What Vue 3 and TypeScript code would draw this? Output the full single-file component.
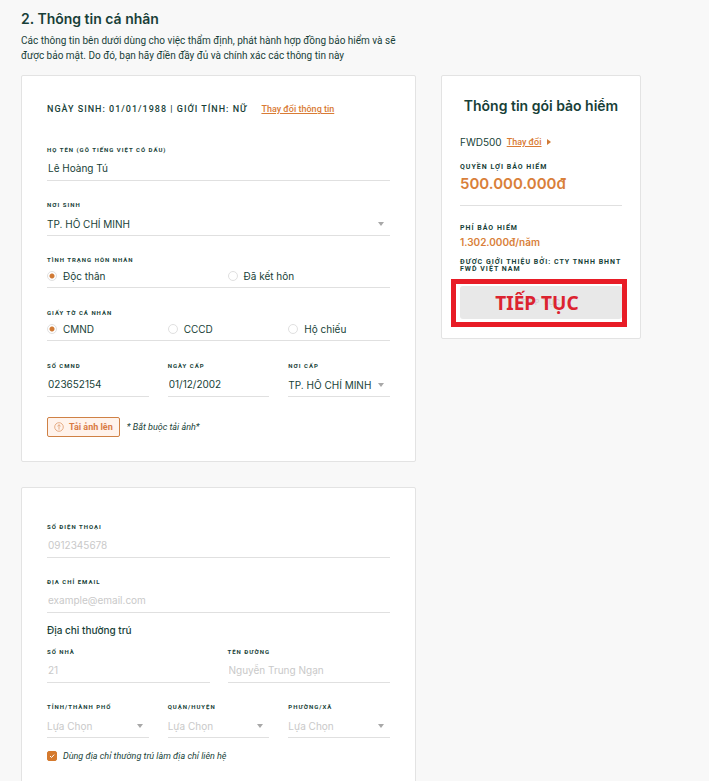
<script setup lang="ts">
import { reactive, ref } from 'vue'

interface Choice {
  id: string
  label: string
}

interface Place {
  id: string
  label: string
}

const person = reactive({
  fullName: 'Lê Hoàng Tú',
  birthPlace: 'TP. HỒ CHÍ MINH',
  marital: 'single',
  paper: 'cmnd',
  idNumber: '023652154',
  issueDate: '01/12/2002',
  issuePlace: 'TP. HỒ CHÍ MINH',
})

const contact = reactive({
  phone: '',
  email: '',
  house: '',
  street: '',
})

const sameAddress = ref(true)

const maritalChoices: Choice[] = [
  { id: 'single', label: 'Độc thân' },
  { id: 'married', label: 'Đã kết hôn' },
]

const paperChoices: Choice[] = [
  { id: 'cmnd', label: 'CMND' },
  { id: 'cccd', label: 'CCCD' },
  { id: 'passport', label: 'Hộ chiếu' },
]

const places: Place[] = [
  { id: 'province', label: 'TỈNH/THÀNH PHỐ' },
  { id: 'district', label: 'QUẬN/HUYỆN' },
  { id: 'ward', label: 'PHƯỜNG/XÃ' },
]
</script>

<template>
  <main class="page">
    <header class="intro">
      <h1>2. Thông tin cá nhân</h1>
      <p>Các thông tin bên dưới dùng cho việc thẩm định, phát hành hợp đồng bảo hiểm và sẽ được bảo mật. Do đó, bạn hãy điền đầy đủ và chính xác các thông tin này</p>
    </header>

    <div class="columns">
      <form class="forms" @submit.prevent>
        <section class="card">
          <div class="summary">
            <span>NGÀY SINH: 01/01/1988 | GIỚI TÍNH: NỮ</span>
            <a class="link" href="#">Thay đổi thông tin</a>
          </div>

          <div class="row">
            <div class="field">
              <label for="full-name">HỌ TÊN (GÕ TIẾNG VIỆT CÓ DẤU)</label>
              <input id="full-name" v-model="person.fullName" class="control" type="text" />
            </div>
          </div>

          <div class="row">
            <div class="field">
              <label for="birth-place">NƠI SINH</label>
              <div class="picker">
                <select id="birth-place" v-model="person.birthPlace" class="control">
                  <option>TP. HỒ CHÍ MINH</option>
                </select>
                <svg class="arrow" viewBox="0 0 6 4" aria-hidden="true"><path d="M0 0h6L3 4z" /></svg>
              </div>
            </div>
          </div>

          <fieldset class="row group">
            <legend>TÌNH TRẠNG HÔN NHÂN</legend>
            <div class="choices two">
              <label v-for="c in maritalChoices" :key="c.id" class="choice">
                <input v-model="person.marital" type="radio" name="marital" :value="c.id" />
                <span>{{ c.label }}</span>
              </label>
            </div>
          </fieldset>

          <fieldset class="row group">
            <legend>GIẤY TỜ CÁ NHÂN</legend>
            <div class="choices three">
              <label v-for="c in paperChoices" :key="c.id" class="choice">
                <input v-model="person.paper" type="radio" name="paper" :value="c.id" />
                <span>{{ c.label }}</span>
              </label>
            </div>
          </fieldset>

          <div class="row three">
            <div class="field">
              <label for="id-number">SỐ CMND</label>
              <input id="id-number" v-model="person.idNumber" class="control" type="text" />
            </div>
            <div class="field">
              <label for="issue-date">NGÀY CẤP</label>
              <input id="issue-date" v-model="person.issueDate" class="control" type="text" />
            </div>
            <div class="field">
              <label for="issue-place">NƠI CẤP</label>
              <div class="picker">
                <select id="issue-place" v-model="person.issuePlace" class="control">
                  <option>TP. HỒ CHÍ MINH</option>
                </select>
                <svg class="arrow" viewBox="0 0 6 4" aria-hidden="true"><path d="M0 0h6L3 4z" /></svg>
              </div>
            </div>
          </div>

          <div class="upload">
            <button type="button" class="upload-button">
              <svg viewBox="0 0 10 10" aria-hidden="true">
                <circle cx="5" cy="5" r="4.3" />
                <path d="M5 7.6V2.8M3.4 4.2L5 2.7l1.6 1.5" />
              </svg>
              <span>Tải ảnh lên</span>
            </button>
            <em>* Bắt buộc tải ảnh*</em>
          </div>
        </section>

        <section class="card contact">
          <div class="row">
            <div class="field">
              <label for="phone">SỐ ĐIỆN THOẠI</label>
              <input id="phone" v-model="contact.phone" class="control" type="tel" placeholder="0912345678" />
            </div>
          </div>

          <div class="row tight">
            <div class="field">
              <label for="email">ĐỊA CHỈ EMAIL</label>
              <input id="email" v-model="contact.email" class="control" type="email" placeholder="example@email.com" />
            </div>
          </div>

          <h2 class="subheading">Địa chỉ thường trú</h2>

          <div class="row two">
            <div class="field">
              <label for="house">SỐ NHÀ</label>
              <input id="house" v-model="contact.house" class="control" type="text" placeholder="21" />
            </div>
            <div class="field">
              <label for="street">TÊN ĐƯỜNG</label>
              <input id="street" v-model="contact.street" class="control" type="text" placeholder="Nguyễn Trung Ngạn" />
            </div>
          </div>

          <div class="row three tight">
            <div v-for="p in places" :key="p.id" class="field">
              <label :for="p.id">{{ p.label }}</label>
              <div class="picker">
                <select :id="p.id" class="control empty">
                  <option value="">Lựa Chọn</option>
                </select>
                <svg class="arrow" viewBox="0 0 6 4" aria-hidden="true"><path d="M0 0h6L3 4z" /></svg>
              </div>
            </div>
          </div>

          <label class="same">
            <span class="tick">
              <input v-model="sameAddress" type="checkbox" />
              <svg v-if="sameAddress" viewBox="0 0 10 10" aria-hidden="true"><path d="M3 5l1.5 1.5L7.2 3.6" /></svg>
            </span>
            <em>Dùng địa chỉ thường trú làm địa chỉ liên hệ</em>
          </label>
        </section>
      </form>

      <aside class="card plan">
        <h2>Thông tin gói bảo hiểm</h2>
        <div class="product">
          <span>FWD500</span>
          <a class="link" href="#">Thay đổi</a>
          <svg viewBox="0 0 4 6" aria-hidden="true"><path d="M0 0l4 3-4 3z" /></svg>
        </div>
        <h3>QUYỀN LỢI BẢO HIỂM</h3>
        <p class="benefit">500.000.000đ</p>
        <h3>PHÍ BẢO HIỂM</h3>
        <p class="fee">1.302.000đ/năm</p>
        <p class="agent">ĐƯỢC GIỚI THIỆU BỞI: CTY TNHH BHNT FWD VIỆT NAM</p>
        <div class="next">
          <button type="button">TIẾP TỤC</button>
          <strong class="callout">TIẾP TỤC</strong>
        </div>
      </aside>
    </div>
  </main>
</template>

<style>
body {
  background: #f8f8f8;
}
</style>

<style scoped>
.page {
  padding: 9px 68px 25px 21px;
  color: #183f38;
  font-family: Inter, "Noto Sans", sans-serif;
  font-size: 10px;
}

.page * {
  box-sizing: border-box;
}

h1,
h2,
h3,
p {
  margin: 0;
}

h1 {
  font-size: 14px;
  font-weight: 600;
  line-height: 20px;
}

.intro p {
  max-width: 395px;
  margin-top: 4px;
  font-family: Roboto, "Noto Sans", sans-serif;
  line-height: 15px;
}

.columns {
  display: grid;
  grid-template-columns: 395fr 200fr;
  gap: 25px;
  align-items: start;
  margin-top: 12px;
}

.forms {
  display: grid;
  gap: 25px;
  min-width: 0;
}

.card {
  min-width: 0;
  padding: 25px 25px 24px;
  border: 1px solid #e3e3e3;
  border-radius: 2px;
  background: #fff;
}

.contact {
  padding-top: 35px;
}

.link {
  color: #d97b35;
  font-family: Roboto, "Noto Sans", sans-serif;
  font-size: 9px;
  font-weight: 500;
  text-decoration: underline;
}

.summary {
  display: flex;
  align-items: center;
  gap: 14px;
  margin-bottom: 29px;
  font-family: Roboto, "Noto Sans", sans-serif;
  font-size: 9px;
  font-weight: 500;
  line-height: 16px;
  letter-spacing: 1px;
  white-space: nowrap;
}

.summary .link {
  letter-spacing: 0;
}

.row {
  margin-bottom: 20px;
}

.row.tight {
  margin-bottom: 10px;
}

.two,
.three {
  display: grid;
  grid-template-columns: 1fr 1fr;
  column-gap: 18px;
}

.three {
  grid-template-columns: 1fr 1fr 1fr;
  column-gap: 19px;
}

.field {
  min-width: 0;
}

.field label,
.group legend {
  display: block;
  padding: 0;
  font-family: Roboto, "Noto Sans", sans-serif;
  font-size: 6px;
  font-weight: 700;
  line-height: 8px;
  letter-spacing: 1px;
  white-space: nowrap;
}

.control {
  display: block;
  width: 100%;
  height: 27px;
  margin: 0;
  padding: 2px 1px 0;
  border: 0;
  border-bottom: 1px solid #e0e0e0;
  border-radius: 0;
  outline: 0;
  background: transparent;
  color: #183f38;
  font-family: inherit;
  font-size: 10px;
  appearance: none;
}

.control::placeholder,
.control.empty {
  color: #c9c9c9;
  opacity: 1;
}

.picker {
  display: grid;
  align-items: center;
}

.picker > * {
  grid-area: 1 / 1;
}

.picker .control {
  padding: 3px 16px 0 0;
}

.arrow {
  justify-self: end;
  width: 6px;
  height: 4px;
  margin: 3px 6px 0 0;
  fill: #a8a8a8;
  pointer-events: none;
}

.group {
  min-width: 0;
  margin-left: 0;
  margin-right: 0;
  margin-bottom: 21px;
  padding: 0;
  border: 0;
}

.choices {
  height: 24px;
  border-bottom: 1px solid #e0e0e0;
}

.choice {
  display: flex;
  align-items: center;
  gap: 6px;
}

.choice input {
  width: 10px;
  height: 10px;
  margin: 0;
  border: 1px solid #e0e0e0;
  border-radius: 50%;
  background: #fff;
  appearance: none;
}

.choice input:checked {
  background: radial-gradient(circle, #d07a35 2px, #fff 3px);
}

.upload {
  display: flex;
  align-items: center;
  gap: 7px;
}

em {
  font-family: Roboto, "Noto Sans", sans-serif;
  font-size: 9px;
  font-style: italic;
}

.upload-button {
  display: flex;
  align-items: center;
  gap: 5px;
  height: 20px;
  padding: 0 6px;
  border: 1px solid #cf8145;
  border-radius: 2px;
  background: #fff3ec;
  color: #d97b45;
  font-family: Roboto, "Noto Sans", sans-serif;
  font-size: 9px;
  font-weight: 700;
}

.upload-button svg {
  width: 10px;
  height: 10px;
  fill: none;
  stroke: #de9a6c;
  stroke-width: 0.8;
}

.subheading {
  margin-bottom: 10px;
  font-size: 10px;
  font-weight: 500;
  line-height: 15px;
}

.same {
  display: flex;
  align-items: center;
  gap: 6px;
  margin-top: 13px;
}

.tick {
  display: grid;
  width: 10px;
  height: 10px;
}

.tick > * {
  grid-area: 1 / 1;
  width: 10px;
  height: 10px;
  margin: 0;
}

.tick input {
  border: 1px solid #d57a2e;
  border-radius: 2px;
  appearance: none;
}

.tick input:checked {
  background: #d57a2e;
}

.tick svg {
  fill: none;
  stroke: #fff;
  pointer-events: none;
}

.plan {
  padding: 20px 18px 19px;
}

.plan h2 {
  font-size: 14px;
  font-weight: 600;
  line-height: 20px;
  text-align: center;
  white-space: nowrap;
}

.product {
  display: flex;
  align-items: center;
  gap: 5px;
  margin: 18px 0 13px;
  line-height: 16px;
}

.product svg {
  width: 4px;
  height: 6px;
  fill: #d07a35;
}

.plan h3,
.agent {
  font-family: Roboto, "Noto Sans", sans-serif;
  font-size: 7px;
  font-weight: 700;
  line-height: 8px;
  letter-spacing: 1px;
}

.benefit {
  margin-bottom: 18px;
  padding: 3px 0 11px;
  border-bottom: 1px solid #e0e0e0;
  color: #d97f3a;
  font-size: 15px;
  font-weight: 600;
  line-height: 20px;
}

.fee {
  margin: 4px 0 11px;
  color: #d97f3a;
  font-size: 10px;
  font-weight: 600;
  line-height: 12px;
}

.plan .agent {
  line-height: 7px;
}

.next {
  position: relative;
  display: grid;
  margin-top: 13px;
}

.next > * {
  grid-area: 1 / 1;
}

.next button {
  height: 33px;
  padding: 0;
  border: 0;
  border-radius: 3px;
  background: #e8e8e8;
  color: #cfcfcf;
  font-family: inherit;
  font-size: 7px;
  font-weight: 600;
  letter-spacing: 1px;
}

.next::after {
  content: "";
  position: absolute;
  inset: -7px -5px -8px -9px;
  border: 5px solid #e81c26;
  pointer-events: none;
}

.callout {
  place-self: center;
  padding-right: 8px;
  color: #dc2330;
  font-family: "Noto Sans", sans-serif;
  font-size: 19px;
  line-height: 24px;
  pointer-events: none;
}
</style>
